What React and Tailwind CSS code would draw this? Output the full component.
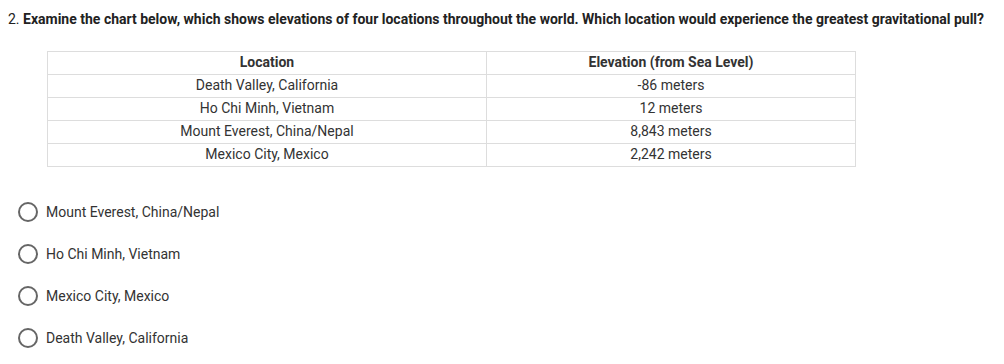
const rows = [
  ['Death Valley, California', '-86 meters'],
  ['Ho Chi Minh, Vietnam', '12 meters'],
  ['Mount Everest, China/Nepal', '8,843 meters'],
  ['Mexico City, Mexico', '2,242 meters'],
];

const options = [
  'Mount Everest, China/Nepal',
  'Ho Chi Minh, Vietnam',
  'Mexico City, Mexico',
  'Death Valley, California',
];

export default function App() {
  return (
    <div className="w-[1004px] h-[364px] bg-white text-[#333] text-[14px] overflow-hidden" style={{ fontFamily: 'Roboto, sans-serif' }}>
      <p className="pl-[8px] pt-[10px] leading-[18px] text-[#222]">
        2. <span className="font-bold">Examine the chart below, which shows elevations of four locations throughout the world. Which location would experience the greatest gravitational pull?</span>
      </p>

      <table className="ml-[47px] mt-[23px] w-[809px] border-collapse table-fixed">
        <thead>
          <tr className="h-[23px]">
            <th className="w-[439px] border border-[#ddd] font-bold text-center leading-[20px] pt-0 pb-[2px] px-0">Location</th>
            <th className="border border-[#ddd] font-bold text-center leading-[20px] pt-0 pb-[2px] px-0">Elevation (from Sea Level)</th>
          </tr>
        </thead>
        <tbody>
          {rows.map(([loc, elev]) => (
            <tr key={loc} className="h-[23px]">
              <td className="border border-[#ddd] text-center leading-[20px] pt-0 pb-[2px] px-0">{loc}</td>
              <td className="border border-[#ddd] text-center leading-[20px] pt-0 pb-[2px] px-0">{elev}</td>
            </tr>
          ))}
        </tbody>
      </table>

      <div className="mt-[35px] pl-[18px] flex flex-col gap-[22px]">
        {options.map((opt) => (
          <label key={opt} className="flex items-center h-[20px] cursor-pointer">
            <span className="w-[20px] h-[20px] rounded-full border-2 border-[#666] shrink-0"></span>
            <span className="ml-[8px] leading-[20px]">{opt}</span>
          </label>
        ))}
      </div>
    </div>
  );
}
